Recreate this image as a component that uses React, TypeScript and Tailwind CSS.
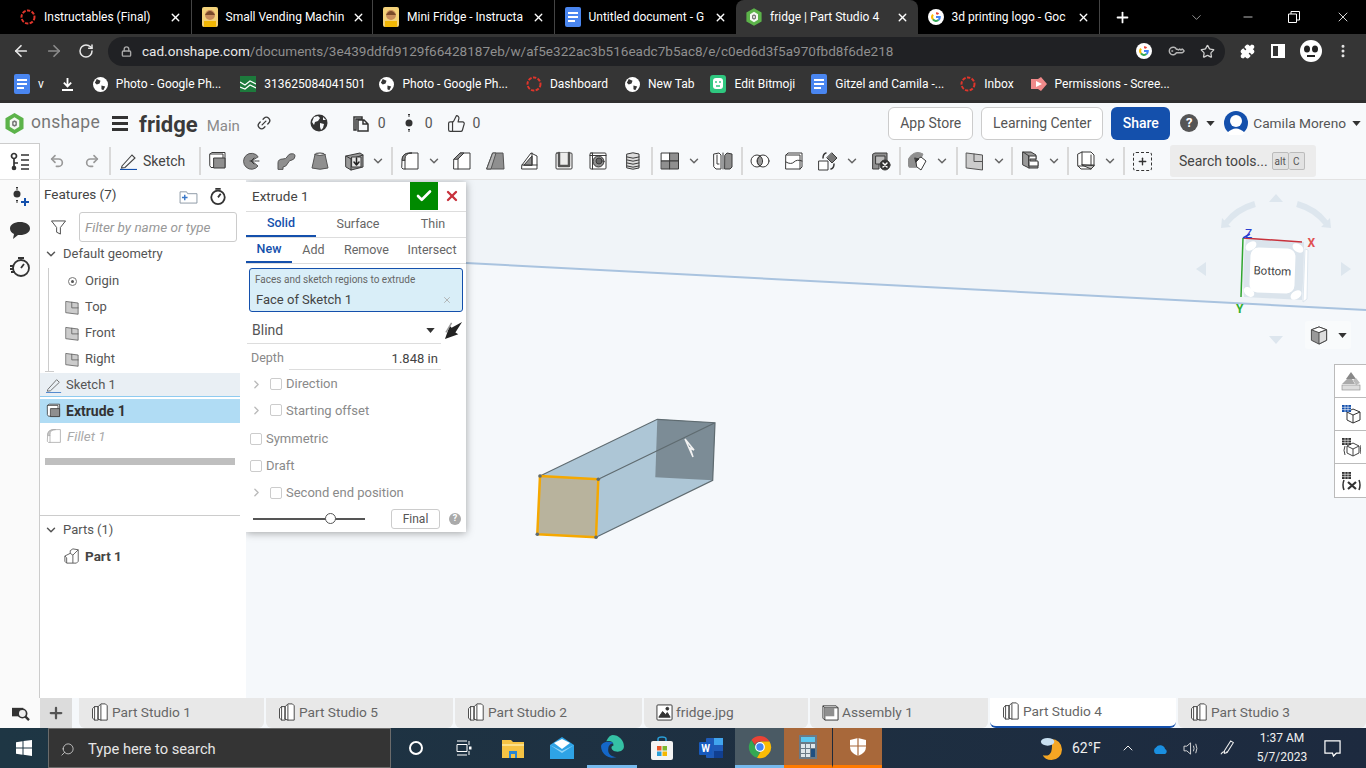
import { ReactNode } from "react";
import {
  ArrowLeft,
  ArrowRight,
  Check,
  ChevronDown,
  ChevronRight,
  ChevronUp,
  EllipsisVertical,
  KeyRound,
  Link2,
  Lock,
  Minus,
  Plus,
  Puzzle,
  RotateCw,
  Search,
  Star,
  ThumbsUp,
  Undo2,
  Redo2,
  X,
} from "lucide-react";

const Caret = ({ className = "" }: { className?: string }) => (
  <svg viewBox="0 0 10 6" className={`w-[9px] h-[5px] ${className}`}>
    <path d="M0 0h10L5 6z" fill="currentColor" />
  </svg>
);

const RedRing = () => (
  <svg viewBox="0 0 16 16" className="w-4 h-4 shrink-0">
    <circle cx="8" cy="8" r="6.5" fill="none" stroke="#e0352b" strokeWidth="2" strokeDasharray="3.4 1.4" />
  </svg>
);

const DocsIcon = () => (
  <svg viewBox="0 0 16 20" className="w-4 h-5 shrink-0">
    <rect width="16" height="20" rx="2" fill="#4a86f0" />
    <path d="M3 6h10M3 10h10M3 14h7" stroke="#fff" strokeWidth="2" />
  </svg>
);

const BitmojiFace = () => (
  <svg viewBox="0 0 16 20" className="w-4 h-5 shrink-0">
    <rect width="16" height="20" rx="2" fill="#f4d27a" />
    <circle cx="8" cy="8" r="5" fill="#c98d5c" />
    <path d="M3 8q5-8 10 0" fill="#7a4a2a" />
    <rect x="2" y="14" width="12" height="6" fill="#f2b705" />
  </svg>
);

const OnshapeMark = ({ className = "w-[19px] h-[21px]" }: { className?: string }) => (
  <svg viewBox="0 0 20 22" className={`${className} shrink-0`}>
    <path d="M10 0l9.5 5.5v11L10 22 .5 16.5v-11z" fill="#5cb34a" />
    <path d="M10 4.500l5 3v7l-5 3-5-3v-7z" fill="#f4f8f2" />
    <path d="M10 7.500l2.500 1.500v4L10 14.500 7.500 13V9z" fill="#777" />
    <path d="M10 9.500l1 .6v1.800l-1 .6-1-.6v-1.800z" fill="#f4f8f2" />
  </svg>
);

const GoogleG = ({ className = "w-4 h-4" }: { className?: string }) => (
  <svg viewBox="0 0 16 16" className={`${className} shrink-0`}>
    <circle cx="8" cy="8" r="8" fill="#fff" />
    <path d="M8 4.2a3.8 3.8 0 0 1 2.5.9" stroke="#ea4335" strokeWidth="2" fill="none" />
    <path d="M5 5.6a3.8 3.8 0 0 0 0 4.8" stroke="#fbbc05" strokeWidth="2" fill="none" />
    <path d="M5 10.4a3.8 3.8 0 0 0 5.5.6" stroke="#34a853" strokeWidth="2" fill="none" />
    <path d="M8 8h3.8a3.8 3.8 0 0 1-1.3 3" stroke="#4285f4" strokeWidth="2" fill="none" />
  </svg>
);

const browserTabs: { title: string; icon: ReactNode; active?: boolean }[] = [
  { title: "Instructables (Final)", icon: <RedRing /> },
  { title: "Small Vending Machin", icon: <BitmojiFace /> },
  { title: "Mini Fridge - Instructa", icon: <BitmojiFace /> },
  { title: "Untitled document - G", icon: <DocsIcon /> },
  { title: "fridge | Part Studio 4", icon: <OnshapeMark className="w-4 h-[18px]" />, active: true },
  { title: "3d printing logo - Goc", icon: <GoogleG /> },
];

function ChromeTabs() {
  return (
    <div className="h-[34px] bg-black flex items-end pl-[10px] text-white">
      {browserTabs.map((t, i) => (
        <div
          key={t.title}
          className={`w-[181.5px] h-[34px] flex items-center pl-[10px] pr-[9px] gap-2 ${
            t.active ? "bg-[#353535] rounded-t-lg" : ""
          } ${i < 3 ? "border-r border-[#444]" : ""}`}
        >
          {t.icon}
          <span className="flex-1 whitespace-nowrap text-[12px] leading-none">{t.title}</span>
          <X className="w-[13px] h-[13px] shrink-0" strokeWidth={2.5} />
        </div>
      ))}
      <div className="h-[34px] flex items-center border-l border-[#444] my-auto">
        <Plus className="w-[17px] h-[17px] ml-[14px]" strokeWidth={2.5} />
      </div>
      <div className="flex-1 h-[34px] flex items-center justify-end">
        <ChevronDown className="w-[15px] h-[15px] mr-[37px] text-[#bbb]" strokeWidth={1.25} />
        <Minus className="w-[14px] h-[14px] mr-[33px]" strokeWidth={1.25} />
        <svg viewBox="0 0 12 12" className="w-3 h-3 mr-[35px]">
          <path d="M.5 3h8v8.5h-8zM3 3V.5h8.5V9H9" fill="none" stroke="#fff" />
        </svg>
        <X className="w-[16px] h-[16px] mr-[15px]" strokeWidth={1.25} />
      </div>
    </div>
  );
}

function AddressBar() {
  return (
    <div className="h-[34px] bg-[#353535] flex items-center text-[#e8e8e8]">
      <ArrowLeft className="w-[18px] h-[18px] ml-[12px]" strokeWidth={2.25} />
      <ArrowRight className="w-[18px] h-[18px] ml-[15px] text-[#8c8c8c]" strokeWidth={2.25} />
      <RotateCw className="w-[16px] h-[16px] ml-[15px]" strokeWidth={2.25} />
      <div className="w-[1117px] h-[29px] ml-[14px] rounded-full bg-[#202124] flex items-center">
        <Lock className="w-[11px] h-[13px] ml-[13px] text-[#a8a8a8]" strokeWidth={3} />
        <span className="ml-[10px] text-[13.56px] whitespace-nowrap">
          cad.onshape.com<span className="text-[#8f8f8f]">/documents/3e439ddfd9129f66428187eb/w/af5e322ac3b516eadc7b5ac8/e/c0ed6d3f5a970fbd8f6de218</span>
        </span>
        <div className="flex-1" />
        <GoogleG />
        <KeyRound className="w-[14px] h-[14px] ml-[17px] text-[#b5b5b5] -rotate-[135deg]" strokeWidth={2.5} />
        <Star className="w-[15px] h-[15px] ml-[17px] mr-[10px] text-[#d0d0d0]" strokeWidth={2} />
      </div>
      <Puzzle className="w-[15px] h-[15px] ml-[15px] text-white fill-white" />
      <div className="w-[14px] h-[14px] ml-[16px] border-2 border-white flex justify-end">
        <div className="w-[5px] h-full bg-white" />
      </div>
      <svg viewBox="0 0 22 22" className="w-[22px] h-[22px] ml-[15px]">
        <circle cx="11" cy="11" r="11" fill="#fff" />
        <ellipse cx="7" cy="9" rx="3" ry="3.5" fill="#222" />
        <ellipse cx="15" cy="9" rx="3" ry="3.5" fill="#222" />
        <path d="M7 16h8" stroke="#222" strokeWidth="2" />
      </svg>
      <EllipsisVertical className="w-[16px] h-[16px] ml-[13px]" strokeWidth={2.5} />
    </div>
  );
}

const Bookmark = ({ icon, label, className = "" }: { icon: ReactNode; label: string; className?: string }) => (
  <div className={`flex items-center gap-2 whitespace-nowrap ${className}`}>
    {icon}
    <span>{label}</span>
  </div>
);

const GlobeMark = () => (
  <svg viewBox="0 0 16 16" className="w-[15px] h-[15px] shrink-0">
    <circle cx="8" cy="8" r="8" fill="#fff" />
    <path d="M4 2l4 2-1 3-3 1-2-2zM9 9l4 1-2 4-2-1z" fill="#353535" />
  </svg>
);

function BookmarksBar() {
  return (
    <div className="h-[35px] bg-[#353535] flex items-center gap-[16px] pl-[14px] text-white text-[12px] border-b-[3px] border-[#2f2f2f]">
      <Bookmark icon={<DocsIcon />} label="v" />
      <svg viewBox="0 0 12 14" className="w-[11px] h-[13px] shrink-0 ml-[2px] mr-[4px]">
        <path d="M6 0v8M2 5l4 4 4-4M0 13h12" stroke="#fff" strokeWidth="2" fill="none" />
      </svg>
      <Bookmark icon={<GlobeMark />} label="Photo - Google Ph..." />
      <Bookmark
        className="ml-[3px]"
        icon={
          <svg viewBox="0 0 16 16" className="w-4 h-4 shrink-0">
            <rect width="16" height="16" fill="#1d7a3c" />
            <path d="M0 6l5 3 5-4 6 3M0 11l5 2 5-4 6 3" stroke="#fff" strokeWidth="1.2" fill="none" />
          </svg>
        }
        label="313625084041501"
      />
      <Bookmark className="-ml-[2px]" icon={<GlobeMark />} label="Photo - Google Ph..." />
      <Bookmark className="ml-[2px]" icon={<RedRing />} label="Dashboard" />
      <Bookmark className="ml-[1px]" icon={<GlobeMark />} label="New Tab" />
      <Bookmark
        icon={
          <svg viewBox="0 0 16 18" className="w-4 h-[18px] shrink-0">
            <rect width="16" height="18" rx="3" fill="#2fc77f" />
            <rect x="3" y="3" width="10" height="11" rx="3" fill="#fff" />
            <path d="M6 6v2M10 6v2M6 11h4" stroke="#2fc77f" strokeWidth="1.4" />
          </svg>
        }
        label="Edit Bitmoji"
      />
      <Bookmark icon={<DocsIcon />} label="Gitzel and Camila -..." />
      <Bookmark icon={<RedRing />} label="Inbox" />
      <Bookmark
        className="ml-[1px]"
        icon={
          <svg viewBox="0 0 16 14" className="w-4 h-[14px] shrink-0">
            <path d="M0 2h7l3-2 6 7-6 7-3-2H0z" fill="#f08a8a" />
            <path d="M5 4l6 3-6 3z" fill="#fff" />
          </svg>
        }
        label="Permissions - Scree..."
      />
    </div>
  );
}

function OnshapeHeader() {
  return (
    <div className="h-[40px] bg-[#f7f9fb] flex items-center text-[#3d3d3d]">
      <div className="ml-[5px]">
        <OnshapeMark />
      </div>
      <span className="ml-[7px] text-[17.5px] text-[#777] tracking-[0.3px] leading-none">onshape</span>
      <div className="ml-[12px] flex flex-col gap-[3px]">
        <div className="w-[16px] h-[3px] bg-[#333]" />
        <div className="w-[16px] h-[3px] bg-[#333]" />
        <div className="w-[16px] h-[3px] bg-[#333]" />
      </div>
      <span className="ml-[11px] mt-[4px] text-[22px] font-bold text-[#3a3a3a] leading-none">fridge</span>
      <span className="ml-[9px] mt-[6px] text-[15px] text-[#8a8a8a] leading-none">Main</span>
      <Link2 className="w-[16px] h-[16px] ml-[16px] -rotate-45" strokeWidth={2} />
      <svg viewBox="0 0 18 18" className="w-[18px] h-[18px] ml-[38px]">
        <circle cx="9" cy="9" r="8.500" fill="#333" />
        <path d="M4 3l4-1 2 2-2 3-3 1-1 3-2-3zM10 9l4 1-1 4-2 2-1-3zM13 3l3 3-3 0z" fill="#f7f9fb" />
      </svg>
      <svg viewBox="0 0 18 18" className="w-[18px] h-[18px] ml-[24px]">
        <path d="M2 3h8v2h-6v11H2zM6 6h6l4 4v7H6zM11 6v4h5" fill="none" stroke="#333" strokeWidth="1.5" />
      </svg>
      <span className="ml-[8px] text-[14px] text-[#555]">0</span>
      <svg viewBox="0 0 8 20" className="w-[8px] h-[20px] ml-[19px]">
        <circle cx="4" cy="10" r="3.5" fill="#333" />
        <path d="M4 1v3M4 16v3" stroke="#333" strokeWidth="2" strokeDasharray="1.5 1" />
      </svg>
      <span className="ml-[12px] text-[14px] text-[#555]">0</span>
      <ThumbsUp className="w-[19px] h-[19px] ml-[14px]" strokeWidth={1.5} />
      <span className="ml-[7px] text-[14px] text-[#555]">0</span>
      <div className="flex-1" />
      <button className="h-[33px] w-[85px] bg-white border border-[#ccc] rounded-md text-[14px] text-[#555]">App Store</button>
      <button className="h-[33px] w-[122px] ml-[8px] bg-white border border-[#ccc] rounded-md text-[14px] text-[#555]">Learning Center</button>
      <button className="h-[33px] w-[59px] ml-[8px] bg-[#1450ac] rounded-md text-[14px] font-medium text-white">Share</button>
      <div className="w-[18px] h-[18px] ml-[10px] rounded-full bg-[#555] text-white text-[13px] font-bold flex items-center justify-center">?</div>
      <Caret className="ml-[8px] text-[#333]" />
      <svg viewBox="0 0 24 24" className="w-[24px] h-[24px] ml-[9px]">
        <circle cx="12" cy="12" r="12" fill="#1450ac" />
        <circle cx="12" cy="10" r="6" fill="#fff" />
        <path d="M3 22q9-9 18 0l-3 2H6z" fill="#fff" />
      </svg>
      <span className="ml-[5px] text-[13.7px] text-[#555] whitespace-nowrap">Camila Moreno</span>
      <Caret className="ml-[6px] mr-[5px] text-[#333]" />
    </div>
  );
}

const Ico = ({ children, className = "w-5 h-5" }: { children: ReactNode; className?: string }) => (
  <svg viewBox="0 0 20 20" className={`${className} shrink-0`} fill="none" stroke="#3a3a3a" strokeWidth="1" strokeLinejoin="round" strokeLinecap="round">
    {children}
  </svg>
);

const ExtrudeIcon = ({ className }: { className?: string }) => (
  <Ico className={className}>
    <path d="M2 3l2-1.500h13v15H3l-1-1.500z" fill="#fff" />
    <path d="M2 3h13v13" />
    <rect x="6" y="7" width="11" height="10" fill="#8f8f8f" />
  </Ico>
);
const RevolveIcon = () => (
  <Ico>
    <path d="M16 5.500A8 8 0 1 0 16 15L10 10z" fill="#8f8f8f" stroke="#555" />
    <path d="M8 10h10" strokeDasharray="1.500 1" />
    <path d="M12 7l-3 3 3 3" />
  </Ico>
);
const SweepIcon = () => (
  <Ico>
    <path d="M2 18v-6q0-4 5-4 3 0 4-2t3-3q5-1 5 2t-3 4q-3 0-4 3-2 4-5 4v2z" fill="#8f8f8f" stroke="#555" />
  </Ico>
);
const LoftIcon = () => (
  <Ico>
    <ellipse cx="10" cy="3.500" rx="5" ry="1.500" fill="#fff" />
    <path d="M5 3.500L2 17q8 2.500 16 0L15 3.500q-5 2-10 0z" fill="#8f8f8f" stroke="#555" />
  </Ico>
);
const ThickenIcon = () => (
  <Ico>
    <path d="M2 5l14-3 3 2v12l-12 3-5-3z" fill="#999" />
    <path d="M2 5l5 3 12-4M7 8v11" />
    <rect x="8" y="6" width="9" height="10" fill="#e6e6e6" />
    <path d="M12.500 7v6M10 11l2.500 3 2.500-3" stroke="#222" strokeWidth="1.500" />
  </Ico>
);
const FilletIcon = ({ dim, className }: { dim?: boolean; className?: string }) => (
  <Ico className={className}>
    <path d="M2 9q0-7 8-7h8v16H3l-1-1z" fill="#fff" stroke={dim ? "#aaa" : "#3a3a3a"} />
    <path d="M2 9q0-7 8-7h2q-7 0-7 6v1z" fill={dim ? "#ccc" : "#8f8f8f"} stroke={dim ? "#aaa" : "#3a3a3a"} />
    <path d="M5 9v9" stroke={dim ? "#aaa" : "#3a3a3a"} />
  </Ico>
);
const ChamferIcon = () => (
  <Ico>
    <path d="M2 8l6-6h10v16H2z" fill="#fff" />
    <path d="M2 8l6-6h4L6 8z" fill="#8f8f8f" />
    <path d="M6 8v10" />
  </Ico>
);
const DraftIcon = () => (
  <Ico>
    <path d="M7 2h10l1 16H1z" fill="#8f8f8f" stroke="#555" />
    <path d="M7 2h3L5 18H1z" fill="#b5b5b5" stroke="#555" />
  </Ico>
);
const RibIcon = () => (
  <Ico>
    <path d="M2 14l9-12 6 3v13H2z" fill="#fff" />
    <path d="M4 14l8-9v9z" fill="#8f8f8f" />
    <path d="M2 14h15M12 2v12" />
  </Ico>
);
const ShellIcon = () => (
  <Ico>
    <rect x="2" y="2" width="16" height="16" rx="1" fill="#fff" />
    <path d="M5 2v13h10V2" stroke="#555" strokeWidth="2.500" fill="#ececec" />
  </Ico>
);
const HoleIcon = () => (
  <Ico>
    <rect x="2" y="2" width="16" height="16" rx="1" fill="#fff" />
    <circle cx="10.500" cy="10.500" r="5.500" fill="#8f8f8f" />
    <circle cx="11" cy="10" r="3" fill="#666" />
    <path d="M2 4.500h16M4.500 2v16" />
  </Ico>
);
const ThreadIcon = () => (
  <Ico>
    <path d="M4 3q6-2.500 12 0v14q-6 2.500-12 0z" fill="#ddd" />
    <path d="M4 6q6 2.500 12 0M4 9q6 2.500 12 0M4 12q6 2.500 12 0M4 15q6 2.500 12 0" />
  </Ico>
);
const PatternIcon = () => (
  <Ico>
    <rect x="1.500" y="2" width="8.500" height="8" fill="#fff" />
    <rect x="10" y="2" width="8.500" height="8" fill="#8f8f8f" />
    <rect x="1.500" y="10" width="8.500" height="8" fill="#8f8f8f" />
    <rect x="10" y="10" width="8.500" height="8" fill="#8f8f8f" />
  </Ico>
);
const MirrorIcon = () => (
  <Ico>
    <path d="M1 3l5-1 2 2v14H3l-2-2z" fill="#fff" />
    <path d="M12 4l2-2 5 1v13l-2 2h-5z" fill="#8f8f8f" />
    <path d="M10 2v16" />
    <path d="M4 4v9h2" />
  </Ico>
);
const BooleanIcon = () => (
  <Ico>
    <circle cx="7" cy="10" r="6" fill="#fff" />
    <circle cx="13" cy="10" r="6" fill="#fff" />
    <path d="M10 5a6 6 0 0 1 0 10 6 6 0 0 1 0-10z" fill="#999" />
  </Ico>
);
const SplitIcon = () => (
  <Ico>
    <path d="M2 4l2-2h14v14l-2 2H2z" fill="#fff" />
    <path d="M2 4h14v14M2 11q5 3 8 0t8-1" />
  </Ico>
);
const TransformIcon = () => (
  <Ico>
    <rect x="1" y="10" width="9" height="9" fill="#fff" />
    <path d="M14 2l5 5-5 5-5-5z" fill="#777" />
    <path d="M5 7q0-4 3-5M16 13q0 4-3 5" strokeWidth="1.500" />
  </Ico>
);
const DeleteIcon = () => (
  <Ico>
    <path d="M2 3l2-1h12v9H8v7H2z" fill="#8f8f8f" />
    <rect x="5" y="5" width="9" height="8" fill="#bbb" />
    <circle cx="14" cy="14" r="5" fill="#333" />
    <path d="M12 12l4 4M16 12l-4 4" stroke="#fff" strokeWidth="1.500" />
  </Ico>
);
const ModifyIcon = () => (
  <Ico>
    <path d="M1 16A10 10 0 0 1 15 3l-6 13z" fill="#8f8f8f" stroke="#8f8f8f" />
    <path d="M8 9l5-3 5 4-5 9-4-3z" fill="#fff" />
    <path d="M7 7l4 1-3 3z" fill="#333" />
  </Ico>
);
const PlaneIcon = ({ className }: { className?: string }) => (
  <Ico className={className}>
    <path d="M1.500 2l16 2v15l-16-2z" fill="#ccc" stroke="#555" />
    <path d="M9 3v7.500h8.500" stroke="#555" />
  </Ico>
);
const FrameIcon = () => (
  <Ico>
    <path d="M3 1h8l5 3v7h2v6h-9l-6-3z" fill="#999" />
    <path d="M9 5h7v3H10v2h8v5H9z" fill="#fff" />
    <path d="M3 1l6 4v12" />
  </Ico>
);
const SheetIcon = () => (
  <Ico>
    <path d="M2 3l4-2h9l3 3v11l-3 3H5l-3-3z" fill="#fff" />
    <path d="M6 1v13h12M2 15h13M15 4v14" />
    <path d="M6 14l9 4 3-3z" fill="#bbb" />
  </Ico>
);
const PartStudioIcon = ({ className = "w-[18px] h-[18px]" }: { className?: string }) => (
  <Ico className={className}>
    <path d="M2 6l2-2h4v15H4l-2-2zM8 4l3-3h5l2 2v16h-7l-3-1z" fill="#fff" />
    <path d="M4 4v15M11 2v17" />
  </Ico>
);

const Tool = ({ children, className = "w-[34px]" }: { children: ReactNode; className?: string }) => (
  <div className={`${className} h-full flex items-center justify-center shrink-0`}>{children}</div>
);
const Chev = ({ className = "w-[20px]" }: { className?: string }) => (
  <div className={`${className} h-full flex items-center shrink-0`}>
    <ChevronDown className="w-[14px] h-[14px] text-[#666]" strokeWidth={2.5} />
  </div>
);
const Sep = () => <div className="w-[2px] h-[28px] bg-[#d9d9d9] shrink-0" />;

function Toolbar() {
  return (
    <div className="h-[37px] bg-[#f7f9fb] border-b border-[#e3e3e3] flex items-center">
      <div className="w-[40px] h-full bg-white border-t border-r border-[#ccc] flex items-center justify-center">
        <svg viewBox="0 0 20 20" className="w-5 h-5" fill="none" stroke="#333" strokeWidth="1.700">
          <circle cx="4" cy="4" r="2.500" />
          <circle cx="4" cy="16" r="1.500" fill="#333" />
          <path d="M4 6v8M4 11h4M11 3h8M11 8h8M11 13h8M11 17h8" />
        </svg>
      </div>
      <Tool>
        <Undo2 className="w-[16px] h-[16px] text-[#999]" strokeWidth={2.5} />
      </Tool>
      <Tool className="w-[35px]">
        <Redo2 className="w-[16px] h-[16px] text-[#999]" strokeWidth={2.5} />
      </Tool>
      <Sep />
      <div className="w-[88px] h-full flex items-center pl-[9px] shrink-0">
        <svg viewBox="0 0 18 18" className="w-[18px] h-[18px] shrink-0" fill="none" stroke="#444" strokeWidth="1.100">
          <path d="M2 14L12 3l3 3L5 15.500l-3.500.500z" />
          <path d="M0 17.500h17" stroke="#1450ac" strokeWidth="1.200" />
        </svg>
        <span className="ml-[5px] text-[14px] text-[#444]">Sketch</span>
      </div>
      <Sep />
      <Tool><ExtrudeIcon /></Tool>
      <Tool><RevolveIcon /></Tool>
      <Tool><SweepIcon /></Tool>
      <Tool><LoftIcon /></Tool>
      <Tool><ThickenIcon /></Tool>
      <Chev />
      <Sep />
      <Tool><FilletIcon /></Tool>
      <Chev className="w-[18px]" />
      <Tool><ChamferIcon /></Tool>
      <Tool><DraftIcon /></Tool>
      <Tool><RibIcon /></Tool>
      <Tool><ShellIcon /></Tool>
      <Tool><HoleIcon /></Tool>
      <Tool className="w-[36px]"><ThreadIcon /></Tool>
      <Sep />
      <Tool><PatternIcon /></Tool>
      <Chev className="w-[18px]" />
      <Tool className="w-[36px]"><MirrorIcon /></Tool>
      <Sep />
      <Tool><BooleanIcon /></Tool>
      <Tool><SplitIcon /></Tool>
      <Tool><TransformIcon /></Tool>
      <Chev className="w-[18px]" />
      <Tool className="w-[36px]"><DeleteIcon /></Tool>
      <Sep />
      <Tool><ModifyIcon /></Tool>
      <Chev className="w-[21px]" />
      <Sep />
      <Tool><PlaneIcon /></Tool>
      <Chev className="w-[19px]" />
      <Sep />
      <Tool><FrameIcon /></Tool>
      <Chev />
      <Sep />
      <Tool><SheetIcon /></Tool>
      <Chev />
      <Sep />
      <Tool>
        <div className="w-[19px] h-[19px] border border-dashed border-[#333] rounded-[3px] flex items-center justify-center">
          <Plus className="w-[11px] h-[11px] text-[#333]" strokeWidth={3} />
        </div>
      </Tool>
      <div className="ml-[11px] w-[146px] h-[32px] bg-[#ececec] rounded-[3px] flex items-center pl-[9px] text-[14px] text-[#444] shrink-0">
        <span className="whitespace-nowrap">Search tools...</span>
        <span className="ml-[4px] h-[18px] px-[2px] bg-[#e2e2e2] border border-[#bbb] rounded-[2px] text-[10px] text-[#555] flex items-center">alt</span>
        <span className="h-[18px] w-[16px] bg-[#e2e2e2] border border-l-0 border-[#bbb] rounded-[2px] text-[10px] text-[#555] flex items-center justify-center">C</span>
      </div>
    </div>
  );
}

function LeftRail() {
  return (
    <div className="w-[40px] bg-[#fafafa] border-r border-[#ccc] flex flex-col items-center pt-[5px] gap-[13px] shrink-0">
      <svg viewBox="0 0 22 22" className="w-[22px] h-[22px]">
        <path d="M8 2v3M8 15v3" stroke="#333" strokeWidth="2" strokeDasharray="1.500 1" />
        <circle cx="8" cy="9" r="3.500" fill="#333" />
        <path d="M12 17h8M16 13v8" stroke="#1450ac" strokeWidth="2" />
      </svg>
      <svg viewBox="0 0 22 20" className="w-[22px] h-[20px]">
        <path d="M11 2c5.500 0 10 2.500 10 6.500S16.500 15 11 15h-2l-5 4 1-5c-2.500-1-4-3-4-5.500C1 4.500 5.500 2 11 2z" fill="#333" />
      </svg>
      <svg viewBox="0 0 22 22" className="w-[22px] h-[22px] mt-[3px]" fill="none" stroke="#333" strokeWidth="1.800">
        <circle cx="12" cy="12" r="8" />
        <path d="M9 2h6M12 12l3-4M1 10h4M1 13h4M2 16h4" />
      </svg>
    </div>
  );
}

const Row = ({ children, className = "" }: { children: ReactNode; className?: string }) => (
  <div className={`h-[26px] flex items-center text-[13px] text-[#555] whitespace-nowrap ${className}`}>{children}</div>
);

function FeaturePanel() {
  return (
    <div className="w-[206px] bg-white flex flex-col shrink-0 relative">
      <div className="h-[32px] flex items-center pl-[4px]">
        <span className="text-[13.500px] text-[#444] -mt-[3px]">Features (7)</span>
        <svg viewBox="0 0 20 16" className="w-[19px] h-[15px] ml-[62px]" fill="none" stroke="#8a96a3">
          <path d="M1 3h7l1 2h10v10H1z" />
          <path d="M6 6v6M3 9h6" stroke="#3a78c8" strokeWidth="1.500" />
        </svg>
        <svg viewBox="0 0 20 20" className="w-[18px] h-[18px] ml-[11px]" fill="none" stroke="#333" strokeWidth="2">
          <circle cx="10" cy="11.500" r="7.500" />
          <path d="M7 2h6M10 11.500l3-4" />
        </svg>
      </div>
      <div className="h-[30px] flex items-center pl-[11px]">
        <svg viewBox="0 0 16 16" className="w-[15px] h-[15px]" fill="none" stroke="#444">
          <path d="M.5 1h15L10 8v7l-4-2V8z" />
        </svg>
        <div className="ml-[13px] w-[158px] h-[30px] border border-[#ccc] rounded-[3px] flex items-center pl-[5px] text-[13.500px] italic text-[#999]">
          Filter by name or type
        </div>
      </div>
      <Row className="ml-[4px] mt-[-1px]">
        <ChevronDown className="w-[14px] h-[14px] ml-[0px] text-[#555]" strokeWidth={2.5} />
        <span className="ml-[5px]">Default geometry</span>
      </Row>
      <div className="absolute left-[8px] top-[88px] w-px h-[103px] bg-[#ccc]" />
      <div className="absolute left-[5px] top-[191px] w-[9px] h-px bg-[#ccc]" />
      <Row className="mt-[1px]">
        <div className="ml-[28px] w-[9px] h-[9px] rounded-full border border-[#777] flex items-center justify-center">
          <div className="w-[3px] h-[3px] rounded-full bg-[#555]" />
        </div>
        <span className="ml-[8px]">Origin</span>
      </Row>
      <Row><PlaneIcon className="w-[15px] h-[15px] ml-[25px]" /><span className="ml-[5px]">Top</span></Row>
      <Row><PlaneIcon className="w-[15px] h-[15px] ml-[25px]" /><span className="ml-[5px]">Front</span></Row>
      <Row><PlaneIcon className="w-[15px] h-[15px] ml-[25px]" /><span className="ml-[5px]">Right</span></Row>
      <div className="h-[24px] w-[200px] bg-[#e9eff4] border-b border-[#8ecbf0] flex items-center text-[13px] text-[#555] mt-[1px]">
        <svg viewBox="0 0 18 18" className="w-[16px] h-[16px] ml-[6px]" fill="none" stroke="#666">
          <path d="M2 14L12 3l3 3L5 15.500l-3.500.500z" />
          <path d="M0 17.500h17" stroke="#3a78c8" />
        </svg>
        <span className="ml-[4px]">Sketch 1</span>
      </div>
      <div className="h-[24px] w-[200px] bg-[#b0dcf4] flex items-center text-[14px] font-bold text-[#333] mt-[2px]">
        <ExtrudeIcon className="w-[16px] h-[16px] ml-[6px]" />
        <span className="ml-[4px]">Extrude 1</span>
      </div>
      <div className="h-[26px] flex items-center text-[13.500px] italic text-[#aaa]">
        <div className="ml-[6px]"><FilletIcon dim className="w-[16px] h-[16px]" /></div>
        <span className="ml-[5px]">Fillet 1</span>
      </div>
      <div className="ml-[5px] w-[190px] h-[7px] bg-[#bfbfbf] mt-[9px]" />
      <div className="w-[200px] h-px bg-[#ccc] mt-[50px]" />
      <Row className="ml-[4px] mt-[1px]">
        <ChevronDown className="w-[14px] h-[14px] text-[#555]" strokeWidth={2.5} />
        <span className="ml-[5px]">Parts (1)</span>
      </Row>
      <Row>
        <svg viewBox="0 0 18 18" className="w-[16px] h-[16px] ml-[24px]" fill="none" stroke="#555">
          <path d="M1 9l6-3V3l3-2 6 1v13l-2 2H3l-2-2zM7 6l3 2 6-6M10 8v9M1 9l2 2v6" />
        </svg>
        <span className="ml-[5px] font-bold text-[#444] text-[13.500px]">Part 1</span>
      </Row>
    </div>
  );
}

const Check4 = () => <div className="w-[12px] h-[12px] border border-[#ccc] rounded-[2px] shrink-0" />;

const DlgRow = ({ label, nested, className = "h-[27px]" }: { label: string; nested?: boolean; className?: string }) => (
  <div className={`${className} flex items-center text-[13px] text-[#8a8a8a] pl-[4px]`}>
    {nested && <ChevronRight className="w-[13px] h-[13px] text-[#bbb] mr-[7px]" strokeWidth={2.5} />}
    <Check4 />
    <span className="ml-[4px]">{label}</span>
  </div>
);

function ExtrudeDialog() {
  return (
    <div className="absolute left-0 top-[2px] w-[220px] h-[350px] bg-white shadow-[0_1px_8px_rgba(0,0,0,0.35)] flex flex-col">
      <div className="h-[30px] flex items-start border-b border-[#ddd]">
        <span className="h-[28px] flex items-center pl-[6px] text-[13.500px] text-[#444] flex-1">Extrude 1</span>
        <div className="w-[28px] h-[28px] bg-[#008a00] flex items-center justify-center">
          <Check className="w-[18px] h-[18px] text-white" strokeWidth={3.5} />
        </div>
        <div className="w-[28px] h-[28px] flex items-center justify-center">
          <X className="w-[16px] h-[16px] text-[#c8323c]" strokeWidth={3.5} />
        </div>
      </div>
      <div className="h-[26px] flex items-stretch text-[12.500px] text-[#666] border-b border-[#ddd]">
        <div className="w-[70px] flex items-center justify-center text-[#1450ac] font-medium border-b-2 border-[#1450ac]">Solid</div>
        <div className="w-[84px] flex items-center justify-center">Surface</div>
        <div className="flex-1 flex items-center justify-center">Thin</div>
      </div>
      <div className="h-[26px] flex items-stretch text-[12.500px] text-[#666] border-b border-[#ddd]">
        <div className="w-[46px] flex items-center justify-center text-[#1450ac] font-medium border-b-2 border-[#1450ac]">New</div>
        <div className="w-[43px] flex items-center justify-center">Add</div>
        <div className="w-[63px] flex items-center justify-center">Remove</div>
        <div className="flex-1 flex items-center justify-center">Intersect</div>
      </div>
      <div className="mx-[3px] mt-[4px] h-[44px] bg-[#d9eef8] border border-[#1450ac] rounded-[3px] pl-[5px] pr-[10px] relative">
        <div className="text-[10px] text-[#666] mt-[5px] leading-[12px] whitespace-nowrap">Faces and sketch regions to extrude</div>
        <div className="flex items-center justify-between text-[13px] text-[#444] mt-[6px] leading-[16px]">
          <span className="pl-[1px]">Face of Sketch 1</span>
          <X className="w-[10px] h-[10px] text-[#aaa]" />
        </div>
      </div>
      <div className="flex items-center mt-[6px] h-[26px]">
        <div className="ml-[1px] w-[194px] h-[26px] flex items-center justify-between pl-[5px] pr-[6px] border-b border-[#ddd] text-[14px] text-[#555]">
          <span>Blind</span>
          <Caret className="text-[#333]" />
        </div>
        <svg viewBox="0 0 20 20" className="w-[19px] h-[19px] ml-[3px]">
          <path d="M19 1L8 7 6 5 1 19l14-5-3-2z" fill="#222" />
          <path d="M2 12L8 2" stroke="#999" strokeWidth="1.500" />
        </svg>
      </div>
      <div className="flex items-end h-[26px] ml-[5px] text-[12.500px] text-[#888]">
        <span className="pb-[2px]">Depth</span>
        <div className="ml-[5px] w-[152px] h-[26px] flex items-end justify-end pr-[3px] border-b border-[#ddd] text-[13px] text-[#444]">1.848 in</div>
      </div>
      <DlgRow label="Direction" nested className="h-[28px] pt-[1px]" />
      <DlgRow label="Starting offset" nested className="h-[28px] pb-[2px]" />
      <DlgRow label="Symmetric" />
      <DlgRow label="Draft" />
      <DlgRow label="Second end position" nested />
      <div className="flex items-center h-[26px] pl-[7px]">
        <div className="w-[112px] h-[1.500px] bg-[#555] relative">
          <div className="absolute left-[72px] top-[-5px] w-[11px] h-[11px] rounded-full bg-white border border-[#555]" />
        </div>
        <button className="ml-[26px] w-[49px] h-[20px] border border-[#ccc] rounded-[3px] text-[12px] text-[#555] flex items-center justify-center">Final</button>
        <div className="ml-[9px] w-[12px] h-[12px] rounded-full bg-[#aaa] text-white text-[9px] font-bold flex items-center justify-center">?</div>
      </div>
    </div>
  );
}

function Viewport() {
  return (
    <svg viewBox="246 180 1120 518" className="absolute inset-0 w-[1120px] h-[518px]">
      <path d="M246 180H1366V310L466 263H246z" fill="#f0f4f8" />
      <path d="M466 263L1366 310" stroke="#a9c3df" strokeWidth="2" fill="none" />

      {/* extruded body */}
      <path d="M540 476L657.300 419.300L715 422.700L712.700 480.300L596 537.300L598.300 479.300z" fill="#adc6d6" />
      <path d="M657.300 419.300L715 422.700L712.700 480.300L655.300 477.300z" fill="#7c8c96" />
      <path d="M540 476L657.300 419.300L715 422.700L712.700 480.300L596 537.300M598.300 479.300L715 422.700" fill="none" stroke="#5f6b70" strokeWidth="1.200" />
      <path d="M540 476L598.300 479.300L596 537.300L537.300 534.300z" fill="#b8b39d" stroke="#f5a800" strokeWidth="2.500" strokeLinejoin="round" />
      <g fill="#5f6b70">
        <circle cx="540" cy="476" r="1.800" />
        <circle cx="598.300" cy="479.300" r="1.800" />
        <circle cx="596" cy="537.300" r="1.800" />
        <circle cx="537.300" cy="534.300" r="1.800" />
      </g>
      <path d="M685 439L693 457L690 448L694 450z" fill="none" stroke="#f2f2f2" strokeWidth="1.500" />

      {/* view cube */}
      <g fill="#dde6ee">
        <path d="M1276 194l7 8h-14zM1206 262v14l-10-7zM1341 262v14l10-7zM1276 344l-7-8h14z" />
      </g>
      <g fill="none" stroke="#dde6ee" strokeWidth="6">
        <path d="M1255 204q-18 5-29 19M1297 204q18 5 29 19" />
      </g>
      <path d="M1222 218l-1 10 10-1zM1330 218l1 10-10-1z" fill="#dde6ee" />
      <path d="M1246 238L1304 242Q1304 270 1302 300L1244 297Q1242 270 1246 238z" fill="#dbe4ec" />
      <path d="M1305 249l3 1-1 49-4 3z" fill="#fff" stroke="#dde6ee" />
      <rect x="1250" y="248" width="45" height="45" rx="8" fill="#fff" transform="rotate(2 1272 270)" />
      <g fill="#fff">
        <ellipse cx="1251" cy="246" rx="6" ry="4" transform="rotate(-35 1251 246)" />
        <ellipse cx="1298" cy="248" rx="6" ry="4" transform="rotate(35 1298 248)" />
        <ellipse cx="1249" cy="292" rx="6" ry="4" transform="rotate(40 1249 292)" />
        <ellipse cx="1296" cy="295" rx="6" ry="4" transform="rotate(-35 1296 295)" />
      </g>
      <text x="1272.500" y="275" textAnchor="middle" fontSize="11.500" fill="#444" fontFamily="Roboto, sans-serif" transform="rotate(2 1272 270)">Bottom</text>
      <path d="M1243 238L1302 242" stroke="#c8323c" strokeWidth="1.500" />
      <path d="M1243 238L1241 297" stroke="#2fa52f" strokeWidth="1.500" />
      <path d="M1243 238L1250 234" stroke="#2a3fd0" strokeWidth="1.500" />
      <text x="1245" y="238" fontSize="12" fill="#2a3fd0" fontFamily="Roboto, sans-serif">Z</text>
      <text x="1307.500" y="247" fontSize="12" fontWeight="700" fill="#e05050" fontFamily="Roboto, sans-serif">X</text>
      <text x="1236" y="313" fontSize="12" fontWeight="700" fill="#2fb02f" fontFamily="Roboto, sans-serif">Y</text>
    </svg>
  );
}

function Canvas() {
  return (
    <div className="flex-1 relative bg-[#f5f8fb] overflow-hidden">
      <Viewport />
      <ExtrudeDialog />
      <div className="absolute left-[1059px] top-[141px] w-[46px] h-[28px] bg-[#f9fbfc] rounded-[3px] flex items-center pl-[5px]">
        <svg viewBox="0 0 18 20" className="w-[18px] h-[19px]" stroke="#444" strokeLinejoin="round">
          <path d="M9 1l8 3v11l-8 4-8-4V4z" fill="#999" />
          <path d="M9 1l8 3-8 3-8-3z" fill="#fff" />
          <path d="M9 7l8-3v11l-8 4z" fill="#ddd" />
        </svg>
        <Caret className="ml-[10px] text-[#333]" />
      </div>
      <div className="absolute right-0 top-[184px] w-[32px] border border-r-0 border-[#bbb] bg-white flex flex-col divide-y divide-[#bbb]">
        <div className="h-[33px] flex items-center justify-center">
          <svg viewBox="0 0 20 20" className="w-5 h-5">
            <path d="M10 1l5 7H5z" fill="#888" />
            <path d="M6 8l5 0 3 5H1z" fill="#aaa" />
            <path d="M15 7l4 5-4 2-3-5z" fill="#bbb" />
            <rect x="1" y="14" width="18" height="5" fill="#ddd" stroke="#888" strokeWidth=".6" />
          </svg>
        </div>
        <div className="h-[33px] flex items-center justify-center">
          <svg viewBox="0 0 20 20" className="w-5 h-5" fill="none" stroke="#333">
            <path d="M6 8l6-3 7 3v8l-7 3-6-3zM6 8l6 3 7-3M12 11v8" />
            <rect x="1" y="1" width="9" height="7" fill="#1450ac" stroke="none" />
            <path d="M1 3.300h9M1 5.600h9M4 1v7M7 1v7" stroke="#fff" strokeWidth=".6" />
          </svg>
        </div>
        <div className="h-[33px] flex items-center justify-center">
          <svg viewBox="0 0 20 20" className="w-5 h-5" fill="none" stroke="#444">
            <path d="M6 9l6-3 6 3v7l-6 3-6-3zM6 9l6 3 6-3M12 12v7" />
            <path d="M4 9Q2 13 4 18M20 8q-1 4 0 9" />
            <rect x="1" y="1" width="9" height="7" fill="#333" stroke="none" />
            <path d="M1 3.300h9M1 5.600h9M4 1v7M7 1v7" stroke="#fff" strokeWidth=".6" />
          </svg>
        </div>
        <div className="h-[33px] flex items-center justify-center">
          <svg viewBox="0 0 20 20" className="w-5 h-5" fill="none" stroke="#333" strokeWidth="1.500">
            <rect x="1" y="1" width="9" height="7" fill="#333" stroke="none" />
            <path d="M1 3.300h9M1 5.600h9M4 1v7M7 1v7" stroke="#fff" strokeWidth=".6" />
            <path d="M3 9q-2 5 0 10M18 9q2 5 0 10" />
            <path d="M7 11l8 7M15 11l-8 7" strokeWidth="2.200" />
          </svg>
        </div>
      </div>
    </div>
  );
}

const studioTabs = [
  { label: "Part Studio 1", w: "w-[185px]", kind: "part" },
  { label: "Part Studio 5", w: "w-[187px]", kind: "part" },
  { label: "Part Studio 2", w: "w-[187px]", kind: "part" },
  { label: "fridge.jpg", w: "w-[164px]", kind: "image" },
  { label: "Assembly 1", w: "w-[178px]", kind: "assembly" },
  { label: "Part Studio 4", w: "w-[186px]", kind: "part", active: true },
  { label: "Part Studio 3", w: "w-[188px]", kind: "part" },
];

function StudioTabs() {
  return (
    <div className="h-[30px] bg-[#f5f8fb] flex items-stretch">
      <div className="w-[40px] bg-[#fafafa] flex items-center justify-center">
        <svg viewBox="0 0 20 18" className="w-[19px] h-[17px]" fill="none">
          <path d="M1 3h12v9H1z" fill="#333" />
          <circle cx="12" cy="9" r="4.500" fill="#eee" stroke="#333" strokeWidth="1.800" />
          <path d="M15 12l4 4" stroke="#333" strokeWidth="2.500" />
        </svg>
      </div>
      <div className="w-[32px] bg-[#dcdcdc] flex items-center justify-center">
        <Plus className="w-[18px] h-[18px] text-[#555]" strokeWidth={3} />
      </div>
      <div className="flex-1 flex items-stretch pl-[7px] gap-[2px]">
        {studioTabs.map((t) => (
          <div
            key={t.label}
            className={`${t.w} shrink-0 rounded-b-md flex items-center pb-[2px] pl-[12px] text-[13.700px] text-[#666] ${
              t.active ? "bg-white border-b-2 border-[#1450ac] text-[#555]" : "bg-[#e8e8e8]"
            }`}
          >
            {t.kind === "part" && <PartStudioIcon />}
            {t.kind === "image" && (
              <svg viewBox="0 0 18 18" className="w-[17px] h-[17px] shrink-0" stroke="#333" fill="none">
                <rect x="1" y="1" width="16" height="16" rx="1" fill="#fff" />
                <path d="M3 14l4-6 3 3 2-2 3 5z" fill="#333" />
                <circle cx="12" cy="5" r="1.500" fill="#333" />
              </svg>
            )}
            {t.kind === "assembly" && (
              <svg viewBox="0 0 18 18" className="w-[17px] h-[17px] shrink-0" stroke="#333" fill="none">
                <path d="M1 2h14l2 2v13H3l-2-2z" fill="#fff" />
                <path d="M1 2l2 2h14M3 4v13" />
                <rect x="3" y="4" width="10" height="9" fill="#8f8f8f" stroke="none" />
              </svg>
            )}
            <span className="ml-[3px] whitespace-nowrap">{t.label}</span>
          </div>
        ))}
      </div>
    </div>
  );
}

const TaskCell = ({ children, className = "" }: { children: ReactNode; className?: string }) => (
  <div className={`w-[49px] h-full flex items-center justify-center shrink-0 ${className}`}>{children}</div>
);

function Taskbar() {
  return (
    <div className="h-[40px] bg-gradient-to-r from-[#1e3644] to-[#1d2a3f] flex items-stretch text-white">
      <div className="w-[48px] flex items-center justify-center shrink-0">
        <svg viewBox="0 0 16 16" className="w-[16px] h-[16px]" fill="#fff">
          <path d="M0 2.200l6.500-1v6.300H0zM7.500 1L16 0v7.500H7.500zM0 8.500h6.500v6.300l-6.500-1zM7.500 8.500H16V16l-8.500-1.200z" />
        </svg>
      </div>
      <div className="w-[343px] bg-[#343434] border border-[#6b6b6b] flex items-center pl-[11px] pt-[2px] shrink-0">
        <Search className="w-[15px] h-[15px] text-[#ddd] -scale-x-100" strokeWidth={1.25} />
        <span className="ml-[13px] text-[14.700px] text-[#e6e6e6]">Type here to search</span>
      </div>
      <div className="w-[12px] shrink-0" />
      <TaskCell className="w-[26px]! mr-[10px]">
        <div className="w-[14px] h-[14px] rounded-full border-2 border-white" />
      </TaskCell>
      <TaskCell>
        <svg viewBox="0 0 16 16" className="w-[16px] h-[16px]" fill="none" stroke="#fff">
          <path d="M1 1h10M1 15h10M1 4.500h10v7H1zM13 1v4M13 11v4" />
          <rect x="13" y="6.500" width="2.500" height="3" fill="#fff" stroke="none" />
        </svg>
      </TaskCell>
      <TaskCell>
        <svg viewBox="0 0 22 20" className="w-[22px] h-[20px]">
          <path d="M0 2h9l2 2h11v16H0z" fill="#f5c344" />
          <path d="M0 6h22v2H0z" fill="#fbe08a" />
          <path d="M7 13h8v7h-2v-4H9v4H7z" fill="#2a86d4" />
        </svg>
      </TaskCell>
      <TaskCell className="w-[50px]!">
        <svg viewBox="0 0 24 22" className="w-[24px] h-[22px]">
          <path d="M0 8L12 0l12 8v14H0z" fill="#2ea3e6" />
          <path d="M0 8l12 8 12-8-12 6z" fill="#8fd3f7" />
          <path d="M4 6l8-4 8 4-8 6z" fill="#fff" />
        </svg>
      </TaskCell>
      <TaskCell className="w-[50px]! border-b-[3px] border-[#76b9ed]">
        <svg viewBox="0 0 24 24" className="w-[25px] h-[25px]">
          <path d="M12 1a11 11 0 0 1 11 11c0 3-3 5-6 5-4 0-6-2-6-4 0-1 1-2 2-2 0-4-4-5-7-4C8 3 10 1 12 1z" fill="#35c1a5" />
          <path d="M1 12a11 11 0 0 0 15 10c-5 0-9-3-8-8 0-3 2-5 5-5-4-3-12-1-12 3z" fill="#1467c8" />
        </svg>
      </TaskCell>
      <TaskCell>
        <svg viewBox="0 0 22 24" className="w-[22px] h-[24px]">
          <path d="M7 5V3q0-2 4-2t4 2v2" stroke="#2a9fd8" strokeWidth="1.500" fill="none" />
          <rect x="0" y="5" width="22" height="19" rx="2" fill="#f4f4f4" />
          <rect x="6" y="10" width="4.500" height="4.500" fill="#e8562a" />
          <rect x="11.500" y="10" width="4.500" height="4.500" fill="#7cb82f" />
          <rect x="6" y="15.500" width="4.500" height="4.500" fill="#2a9fd8" />
          <rect x="11.500" y="15.500" width="4.500" height="4.500" fill="#f5b800" />
        </svg>
      </TaskCell>
      <TaskCell>
        <svg viewBox="0 0 24 24" className="w-[24px] h-[24px]">
          <rect x="7" y="2" width="17" height="20" rx="1" fill="#1f5bb8" />
          <rect x="15" y="2" width="9" height="7" fill="#41a5ee" />
          <rect x="15" y="15" width="9" height="7" fill="#103f91" />
          <rect x="0" y="6" width="13" height="13" rx="1" fill="#185abd" />
          <text x="6.500" y="16" textAnchor="middle" fontSize="10" fontWeight="700" fill="#fff" fontFamily="Roboto, sans-serif">W</text>
        </svg>
      </TaskCell>
      <TaskCell className="bg-[#4a5a64] border-b-[3px] border-[#76b9ed]">
        <svg viewBox="0 0 24 24" className="w-[24px] h-[24px]">
          <path d="M12 1a11 11 0 0 1 9.500 5.500H12a5.500 5.500 0 0 0-5 3.200L3.400 5A11 11 0 0 1 12 1z" fill="#ea4335" />
          <path d="M3.400 5L8 13a5.500 5.500 0 0 0 4 4l-3 5.700A11 11 0 0 1 3.400 5z" fill="#34a853" />
          <path d="M21.500 6.500A11 11 0 0 1 9 22.700L14.800 13a5.500 5.500 0 0 0-2.800-6.500z" fill="#fbbc05" />
          <circle cx="12" cy="12" r="4.300" fill="#4285f4" stroke="#fff" strokeWidth="1.200" />
        </svg>
      </TaskCell>
      <TaskCell className="bg-[#a8683a] border-b-[3px] border-[#ff7a00] border-r border-r-[#1e2a3a]">
        <svg viewBox="0 0 18 24" className="w-[18px] h-[24px]">
          <rect width="18" height="24" fill="#6b7a86" />
          <rect x="2" y="2" width="14" height="5" fill="#5cc8f0" />
          <path d="M2 9h4v4H2zM7 9h4v4H7zM12 9h4v4h-4zM2 14h4v4H2zM7 14h4v4H7zM2 19h4v3H2zM7 19h4v3H7z" fill="#dfe6ea" />
          <rect x="12" y="14" width="4" height="8" fill="#1f4f80" />
        </svg>
      </TaskCell>
      <TaskCell className="bg-[#a8683a] border-b-[3px] border-[#ff7a00]">
        <svg viewBox="0 0 16 18" className="w-[16px] h-[18px]">
          <path d="M8 0l8 2v7q0 6-8 9-8-3-8-9V2z" fill="#fff" />
          <path d="M8 0v18M0 8h16" stroke="#a8683a" strokeWidth="1.200" />
        </svg>
      </TaskCell>
      <div className="flex-1" />
      <div className="flex items-center shrink-0 text-[14px] text-[#f0f0f0]">
        <svg viewBox="0 0 24 26" className="w-[23px] h-[25px]">
          <path d="M13 3a11 11 0 0 1 0 22q-7 0-9-5 12 3 9-17z" fill="#f5a623" />
          <ellipse cx="9" cy="6" rx="7" ry="4" fill="#c8dff0" />
        </svg>
        <span className="ml-[10px] w-[28px]">62°F</span>
        <ChevronUp className="w-[16px] h-[16px] ml-[20px]" strokeWidth={1.5} />
        <svg viewBox="0 0 18 12" className="w-[17px] h-[11px] ml-[16px]">
          <path d="M4 12a4 4 0 0 1 0-7 5.500 5.500 0 0 1 10 1.500A3 3 0 0 1 14 12z" fill="#1a8fe0" />
        </svg>
        <svg viewBox="0 0 18 16" className="w-[17px] h-[15px] ml-[14px]" fill="none" stroke="#ddd">
          <path d="M1 5.500h3L8 2v12l-4-3.500H1zM11 5q1.500 3 0 6M13.500 3q2.500 5 0 10" />
        </svg>
        <svg viewBox="0 0 18 20" className="w-[16px] h-[18px] ml-[20px]" fill="none" stroke="#eee">
          <path d="M5 13L12 2l3 2-7 11-3 1zM1 17q3-4 4-2t3-1" strokeWidth="1.200" />
        </svg>
        <div className="ml-[11px] w-[70px] flex flex-col items-center text-[12px] leading-[19px]">
          <span>1:37 AM</span>
          <span>5/7/2023</span>
        </div>
        <svg viewBox="0 0 18 18" className="w-[17px] h-[17px] ml-[7px] mr-[25px]" fill="none" stroke="#fff" strokeWidth="1.300">
          <path d="M1 1h16v13h-4l-3 3-1-3H1z" />
        </svg>
      </div>
    </div>
  );
}

export default function App() {
  return (
    <div className="w-[1366px] h-[768px] overflow-hidden flex flex-col font-['Roboto',sans-serif]">
      <ChromeTabs />
      <AddressBar />
      <BookmarksBar />
      <OnshapeHeader />
      <Toolbar />
      <div className="h-[518px] flex items-stretch">
        <LeftRail />
        <FeaturePanel />
        <Canvas />
      </div>
      <StudioTabs />
      <Taskbar />
    </div>
  );
}
